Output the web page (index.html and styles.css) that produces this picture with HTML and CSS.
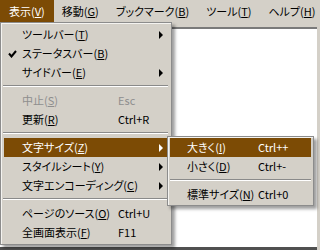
FILE: index.html
```html
<!DOCTYPE html>
<html lang="ja">
<head>
<meta charset="utf-8">
<title>表示メニュー</title>
<link rel="stylesheet" href="styles.css">
</head>
<body>
<div class="window">
  <div class="menubar">
    <span class="mb-item active">表示(<u>V</u>)</span>
    <span class="mb-item">移動(<u>G</u>)</span>
    <span class="mb-item">ブックマーク(<u>B</u>)</span>
    <span class="mb-item">ツール(<u>T</u>)</span>
    <span class="mb-item">ヘルプ(<u>H</u>)</span>
  </div>
  <div class="content"></div>

  <div class="menu main-menu">
    <div class="mi"><span class="ind"></span><span class="lbl">ツールバー(<u>T</u>)</span><span class="sc"></span><span class="arr"><i class="tri"></i></span></div>
    <div class="mi"><span class="ind"><svg class="check" width="9" height="8" viewBox="0 0 9 8"><polyline points="1,3.5 3.5,6.5 8,1" fill="none" stroke="#000" stroke-width="2"/></svg></span><span class="lbl">ステータスバー(<u>B</u>)</span><span class="sc"></span><span class="arr"></span></div>
    <div class="mi"><span class="ind"></span><span class="lbl">サイドバー(<u>E</u>)</span><span class="sc"></span><span class="arr"><i class="tri"></i></span></div>
    <div class="sep"></div>
    <div class="mi disabled"><span class="ind"></span><span class="lbl">中止(<u>S</u>)</span><span class="sc">Esc</span><span class="arr"></span></div>
    <div class="mi"><span class="ind"></span><span class="lbl">更新(<u>R</u>)</span><span class="sc">Ctrl+R</span><span class="arr"></span></div>
    <div class="sep"></div>
    <div class="mi hl"><span class="ind"></span><span class="lbl">文字サイズ(<u>Z</u>)</span><span class="sc"></span><span class="arr"><i class="tri"></i></span></div>
    <div class="mi"><span class="ind"></span><span class="lbl">スタイルシート(<u>Y</u>)</span><span class="sc"></span><span class="arr"><i class="tri"></i></span></div>
    <div class="mi"><span class="ind"></span><span class="lbl">文字エンコーディング(<u>C</u>)</span><span class="sc"></span><span class="arr"><i class="tri"></i></span></div>
    <div class="sep"></div>
    <div class="mi"><span class="ind"></span><span class="lbl">ページのソース(<u>O</u>)</span><span class="sc">Ctrl+U</span><span class="arr"></span></div>
    <div class="mi"><span class="ind"></span><span class="lbl">全画面表示(<u>F</u>)</span><span class="sc">F11</span><span class="arr"></span></div>
  </div>

  <div class="menu sub-menu">
    <div class="mi hl"><span class="ind"></span><span class="lbl">大きく(<u>I</u>)</span><span class="sc">Ctrl++</span></div>
    <div class="mi"><span class="ind"></span><span class="lbl">小さく(<u>D</u>)</span><span class="sc">Ctrl+-</span></div>
    <div class="sep"></div>
    <div class="mi"><span class="ind"></span><span class="lbl">標準サイズ(<u>N</u>)</span><span class="sc">Ctrl+0</span></div>
  </div>
</div>
</body>
</html>
```
FILE: styles.css
```css
html, body {
  margin: 0;
  padding: 0;
}
body {
  background: #d4d0c8;
  font-family: "Noto Sans CJK JP", "Noto Sans", sans-serif;
  font-size: 11px;
  color: #000;
}
.window {
  position: relative;
  width: 320px;
  height: 250px;
  overflow: hidden;
}
u {
  text-decoration: underline;
  text-underline-offset: 1px;
}
.menubar {
  display: flex;
  height: 22px;
}
.mb-item {
  line-height: 22px;
  padding: 0 9px 0 8px;
  white-space: nowrap;
  font-feature-settings: "palt";
}
.mb-item:first-child {
  padding-left: 9px;
}
.mb-item.active {
  background: #7c4b05;
  color: #fff;
}
.content {
  margin: 5px 3px 0 0;
  height: 218px;
  background: #fff;
  border-top: 2px solid #7a7a7a;
  border-bottom: 3px solid #505050;
}
.menu {
  position: absolute;
  box-sizing: border-box;
  background: #d4d0c8;
  border: 1px solid #8c8c8c;
  box-shadow: inset 1px 1px 0 #f4f3f0, 3px 3px 3px rgba(0, 0, 0, 0.38);
}
.main-menu {
  left: 0;
  top: 22px;
  width: 172px;
  padding: 2px 4px 2px 3px;
}
.sub-menu {
  left: 167px;
  top: 136px;
  width: 147px;
  padding: 1px 2px 1px 2px;
}
.mi {
  display: flex;
  align-items: center;
  height: 19px;
  line-height: 19px;
  white-space: nowrap;
}
.mi .ind {
  display: flex;
  align-items: center;
  flex: 0 0 18px;
  height: 19px;
}
.sub-menu .mi .ind {
  flex-basis: 17px;
}
.lbl {
  font-feature-settings: "palt";
}
.main-menu .lbl {
  flex: 0 0 96px;
}
.sub-menu .lbl {
  flex: 0 0 71px;
}
.sc {
  flex: 1 1 auto;
}
.arr {
  flex: 0 0 12px;
  display: flex;
  align-items: center;
  height: 19px;
}
.tri {
  display: block;
  margin-left: 4px;
  width: 0;
  height: 0;
  border-left: 4px solid #000;
  border-top: 4px solid transparent;
  border-bottom: 4px solid transparent;
}
.check {
  margin-left: 4px;
  display: block;
}
.mi.hl {
  background: #7c4b05;
  color: #fff;
}
.mi.hl .tri {
  border-left-color: #fff;
}
.mi.disabled {
  color: #8e8e8e;
}
.sep {
  height: 0;
  margin: 3px -1px 4px;
  border-top: 1px solid #8a8a8a;
  border-bottom: 1px solid #ffffff;
}
.sub-menu .sep {
  margin: 3px 0 4px;
}
```
